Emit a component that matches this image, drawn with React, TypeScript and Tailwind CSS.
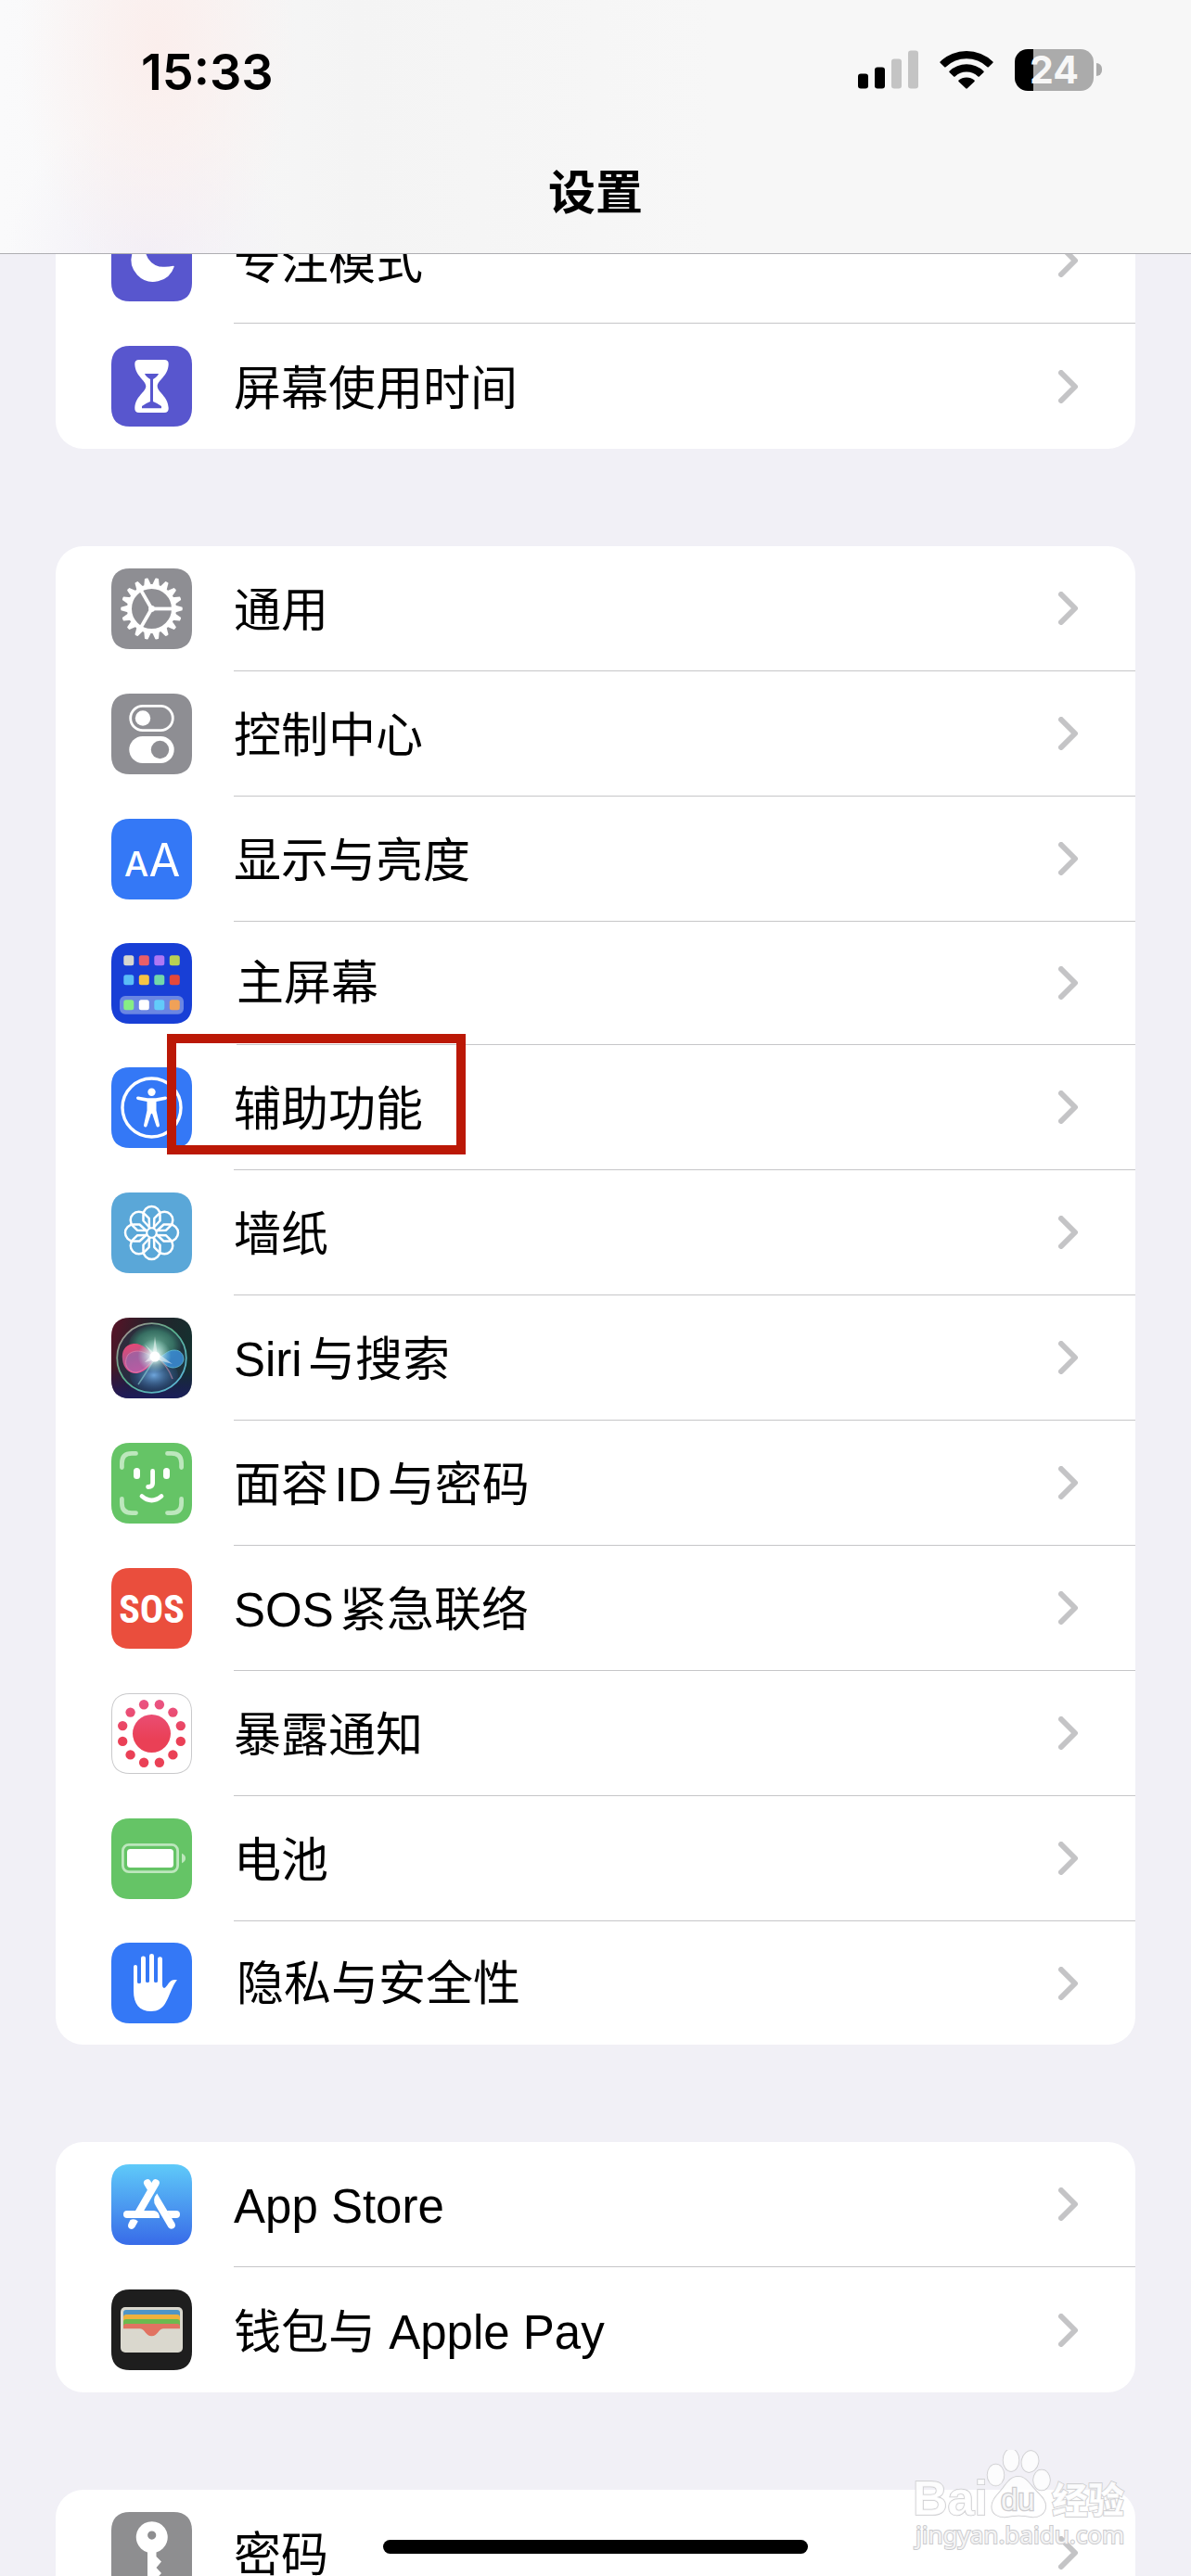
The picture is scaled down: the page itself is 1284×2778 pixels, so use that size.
import type { ReactNode } from "react";

type Item = {
  label: string;
  icon: ReactNode;
  compact?: boolean;
  highlighted?: boolean;
};

function Tile({ fill, children }: { fill: string; children?: ReactNode }) {
  return (
    <svg viewBox="0 0 87 87" className="block size-[87px]" aria-hidden="true">
      <path
        fill={fill}
        d="M20 0H67C80 0 87 7 87 20V67C87 80 80 87 67 87H20C7 87 0 80 0 67V20C0 7 7 0 20 0Z"
      />
      {children}
    </svg>
  );
}

function FocusIcon() {
  return (
    <Tile fill="#5856ce">
      <path
        d="M67 49.500A23 23 0 1 1 39 20A20 20 0 0 0 58 50.500Q62 50.500 67 49.500Z"
        fill="#fff"
        stroke="#fff"
        strokeWidth="1.500"
        strokeLinejoin="round"
      />
    </Tile>
  );
}

function HourglassIcon() {
  return (
    <Tile fill="#5856ce">
      <path
        d="M30 15H57Q62 15 61.700 20C61 33 49.700 37 49.700 43.500C49.700 50 61 54 61.700 67Q62 72 57 72H30Q25 72 25.300 67C26 54 37.300 50 37.300 43.500C37.300 37 26 33 25.300 20Q25 15 30 15Z"
        fill="#fff"
      />
      <path
        d="M36 30H51Q50 33 45 36V60Q50 62 54 65V67.300H33V65Q37 62 42 60V36Q37 33 36 30Z"
        fill="#5856ce"
      />
    </Tile>
  );
}

function GearIcon() {
  const teeth = Array.from({ length: 18 }, (_, i) => i * 20);
  return (
    <Tile fill="#8e8e93">
      <g transform="translate(43.500 43.500)" fill="#fff">
        {teeth.map((angle) => (
          <path key={angle} transform={`rotate(${angle})`} d="M25 -4L33 -1.800Q33.600 0 33 1.800L25 4Z" />
        ))}
        <circle r="24" fill="none" stroke="#fff" strokeWidth="5" />
        {[0, 120, 240].map((angle) => (
          <path key={angle} transform={`rotate(${angle})`} d="M0 -1.900H23V1.900H0Z" />
        ))}
        <circle r="3.400" />
      </g>
    </Tile>
  );
}

function TogglesIcon() {
  return (
    <Tile fill="#8e8e93">
      <rect x="20.700" y="13.400" width="45.600" height="26.200" rx="13.100" fill="none" stroke="#fff" strokeWidth="2.800" />
      <circle cx="34" cy="26.500" r="8.200" fill="#fff" />
      <rect x="19.300" y="46" width="48.400" height="29" rx="14.500" fill="#fff" />
      <circle cx="52.500" cy="60.500" r="9.700" fill="#8e8e93" />
    </Tile>
  );
}

function DisplayIcon() {
  return (
    <Tile fill="#3478f6">
      <g fill="#fff" fontFamily="Inter, sans-serif" textAnchor="middle">
        <text x="27" y="62" fontSize="37" fontWeight="500">A</text>
        <text x="57.500" y="62" fontSize="49" fontWeight="400">A</text>
      </g>
    </Tile>
  );
}

function HomeScreenIcon() {
  const rows = [
    { y: 13.3, colors: ["#d6d6cf", "#e95f68", "#ad77f5", "#b9d155"] },
    { y: 34.3, colors: ["#5abdf7", "#f6c445", "#72d7aa", "#e5483a"] },
    { y: 61.3, colors: ["#86ee85", "#ffffff", "#62cbfa", "#f0a158"] },
  ];
  return (
    <Tile fill="#183fd6">
      <rect x="9" y="57" width="69" height="19.700" rx="6" fill="#6a86e3" />
      {rows.map((row) =>
        row.colors.map((color, i) => (
          <rect key={color} x={13.3 + i * 16.5} y={row.y} width="11" height="11" rx="2.500" fill={color} />
        )),
      )}
    </Tile>
  );
}

function AccessibilityIcon() {
  return (
    <Tile fill="#3478f6">
      <circle cx="43.500" cy="43.500" r="31.500" fill="none" stroke="#fff" strokeWidth="3.400" />
      <circle cx="43.500" cy="26.700" r="4.200" fill="#fff" />
      <path
        d="M29 31.500L39 33.200H48L58 31.500Q60 31.300 60 33Q60 34.600 58.500 35L48.500 37V46.500L52 62.500Q52 64.600 50.300 64.600Q48.900 64.600 48.400 63L44.300 50.500Q43.500 49 42.700 50.500L38.600 63Q38.100 64.600 36.700 64.600Q35 64.600 35 62.500L38.500 46.500V37L28.500 35Q27 34.600 27 33Q27 31.300 29 31.500Z"
        fill="#fff"
      />
    </Tile>
  );
}

function WallpaperIcon() {
  const petals = [0, 45, 90, 135, 180, 225, 270, 315];
  return (
    <Tile fill="#5aa7d8">
      <g transform="translate(43.500 43.500)" fill="none" stroke="#fff" strokeWidth="2.500" strokeLinejoin="round">
        {petals.map((angle) => (
          <path
            key={angle}
            transform={`rotate(${angle})`}
            d="M-1.500 -5L-9 -13V-19.500A9 9 0 0 1 9 -19.500V-13L1.500 -5"
          />
        ))}
        <circle r="5.200" strokeWidth="2" />
      </g>
    </Tile>
  );
}

function SiriIcon() {
  return (
    <Tile fill="url(#siri-base)">
      <defs>
        <linearGradient id="siri-base" x1="0" y1="0" x2="1" y2="0.300">
          <stop offset="0" stopColor="#5a1226" />
          <stop offset="0.450" stopColor="#26222b" />
          <stop offset="1" stopColor="#15302f" />
        </linearGradient>
        <linearGradient id="siri-floor" x1="0" y1="0" x2="0" y2="1">
          <stop offset="0.300" stopColor="#1c1060" stopOpacity="0" />
          <stop offset="1" stopColor="#1c1a66" stopOpacity="0.800" />
        </linearGradient>
        <linearGradient id="siri-ring" x1="0" y1="0" x2="1" y2="1">
          <stop offset="0" stopColor="#b58a92" />
          <stop offset="0.450" stopColor="#58b08a" />
          <stop offset="1" stopColor="#5cb6e6" />
        </linearGradient>
        <radialGradient id="siri-green">
          <stop offset="0" stopColor="#6aa893" />
          <stop offset="0.700" stopColor="#3a7a69" stopOpacity="0.850" />
          <stop offset="1" stopColor="#2f6f5f" stopOpacity="0.200" />
        </radialGradient>
        <radialGradient id="siri-blue">
          <stop offset="0" stopColor="#6fa6dc" />
          <stop offset="1" stopColor="#24558f" stopOpacity="0.200" />
        </radialGradient>
        <linearGradient id="siri-pink" x1="0" y1="0" x2="0.300" y2="1">
          <stop offset="0" stopColor="#ef4570" />
          <stop offset="0.500" stopColor="#b8568c" />
          <stop offset="1" stopColor="#ea4a92" />
        </linearGradient>
        <radialGradient id="siri-glow">
          <stop offset="0" stopColor="#ffffff" />
          <stop offset="0.300" stopColor="#e6fffb" stopOpacity="0.800" />
          <stop offset="1" stopColor="#a8e6dc" stopOpacity="0" />
        </radialGradient>
      </defs>
      <path
        fill="url(#siri-floor)"
        d="M0 40H87V67C87 80 80 87 67 87H20C7 87 0 80 0 67Z"
      />
      <circle cx="43.500" cy="43.500" r="37" fill="#27384a" fillOpacity="0.600" />
      <ellipse cx="47" cy="29" rx="28" ry="21" fill="url(#siri-green)" />
      <ellipse cx="46" cy="62" rx="26" ry="18" fill="url(#siri-blue)" />
      <path
        d="M50 44C40 34 32 27 24 28C14 29 11 37 12 45C13 55 20 61 28 60C38 58 42 50 50 44Z"
        fill="url(#siri-pink)"
      />
      <path
        d="M47 44C36 36 26 33 18 40C12 50 18 59 27 59C37 57 40 50 47 44Z"
        fill="#8a6cb4"
        fillOpacity="0.500"
        stroke="#e08ab0"
        strokeWidth="0.700"
      />
      <path
        d="M50 43C56 42 60 35 68 35C75 35 78 40 78 45C77 51 72 54 66 54C58 53 56 47 50 43Z"
        fill="#3a8ad0"
        fillOpacity="0.900"
        stroke="#5fc0d8"
        strokeWidth="0.800"
      />
      <path d="M48 42Q36 62 29 72" stroke="#8fd2d4" strokeOpacity="0.600" strokeWidth="1.500" fill="none" />
      <path d="M48 42Q60 50 66 66" stroke="#c98aa8" strokeOpacity="0.600" strokeWidth="1.500" fill="none" />
      <circle cx="43.500" cy="43.500" r="37.300" fill="none" stroke="url(#siri-ring)" strokeWidth="1.800" />
      <circle cx="46.500" cy="41" r="18" fill="url(#siri-glow)" />
      <path d="M47 20L49.500 38L66 50L48 45L36 48L44 40L36 29L45 37Z" fill="#fff" fillOpacity="0.500" />
      <circle cx="47" cy="42" r="5.500" fill="#fff" />
    </Tile>
  );
}

function FaceIdIcon() {
  return (
    <Tile fill="#65c466">
      <g fill="none" strokeLinecap="round" strokeWidth="4.800">
        <path
          d="M11.400 26.500V22Q11.400 11.400 22 11.400H26.500M60.500 11.400H65Q75.600 11.400 75.600 22V26.500M75.600 60.500V65Q75.600 75.600 65 75.600H60.500M26.500 75.600H22Q11.400 75.600 11.400 65V60.500"
          stroke="#bde7bd"
        />
        <path d="M44.600 30.500V43.500Q44.600 47.500 39.600 47.500M33 57.500Q43.500 66.500 54 57.500" stroke="#fff" />
      </g>
      <rect x="24" y="27" width="7" height="12" rx="3.500" fill="#fff" />
      <rect x="56" y="27" width="7" height="12" rx="3.500" fill="#fff" />
    </Tile>
  );
}

function SosIcon() {
  return (
    <Tile fill="#ea4e3d">
      <text
        x="43.500"
        y="58.500"
        fill="#fff"
        fontFamily="'Roboto Condensed', 'Liberation Sans Narrow', Roboto, sans-serif"
        fontSize="42"
        fontWeight="700"
        textAnchor="middle"
      >
        SOS
      </text>
    </Tile>
  );
}

function ExposureIcon() {
  const dots = Array.from({ length: 12 }, (_, i) => ((i * 30 + 15) * Math.PI) / 180);
  return (
    <Tile fill="#c9c9cb">
      <defs>
        <linearGradient id="exposure" gradientUnits="userSpaceOnUse" x1="0" y1="6" x2="0" y2="50">
          <stop offset="0" stopColor="#ea5585" />
          <stop offset="1" stopColor="#ea4056" />
        </linearGradient>
      </defs>
      <path
        fill="#fff"
        d="M20 1H67C79.500 1 86 7.500 86 20V67C86 79.500 79.500 86 67 86H20C7.500 86 1 79.500 1 67V20C1 7.500 7.500 1 20 1Z"
      />
      <circle cx="43.500" cy="43.500" r="20.500" fill="url(#exposure)" />
      {dots.map((a) => (
        <circle key={a} cx={43.5 + 32.4 * Math.cos(a)} cy={43.5 + 32.4 * Math.sin(a)} r="5.200" fill="url(#exposure)" />
      ))}
    </Tile>
  );
}

function BatteryIcon() {
  return (
    <Tile fill="#65c466">
      <rect x="12.400" y="28.400" width="59.200" height="29.200" rx="6.500" fill="none" stroke="#bde7bd" strokeWidth="2.800" />
      <rect x="17" y="33" width="50" height="20" rx="3.500" fill="#fff" />
      <path d="M76 37.800Q80 39.500 80 43Q80 46.500 76 48.300Z" fill="#bde7bd" />
    </Tile>
  );
}

function PrivacyIcon() {
  return (
    <Tile fill="#3478f6">
      <path
        d="M24 26Q24 24 26 24Q28 24 28 26V42.500Q28 44 30 44Q32 44 32 42.500V16.700Q32 14.500 34.500 14.500Q37 14.500 37 16.700V41.500Q37 43 39 43Q41 43 41 41.500V14.200Q41 12 43.500 12Q46 12 46 14.200V41.500Q46 43 48 43Q50 43 50 41.500V17.500Q50 15.300 52.500 15.300Q55 15.300 55 17.500V46Q55.300 49.500 57.500 48.800Q59 48 62 43.500Q65.500 39 71 40.300Q69 42 66 48.500C60 61 58 74 43 74C30 74 24 66 24 52Z"
        fill="#fff"
      />
    </Tile>
  );
}

function AppStoreIcon() {
  return (
    <Tile fill="url(#app-store)">
      <defs>
        <linearGradient id="app-store" x1="0" y1="0" x2="0" y2="1">
          <stop offset="0" stopColor="#5fcaf9" />
          <stop offset="1" stopColor="#386be8" />
        </linearGradient>
      </defs>
      <g fill="#fff">
        <path d="M47.800 20.200L29.500 52" stroke="#fff" strokeWidth="8" strokeLinecap="round" />
        <path d="M39 20.200L42.500 26" stroke="#fff" strokeWidth="8" strokeLinecap="round" />
        <path d="M49.300 31.500Q43.500 38 48 45L61.500 68Q63.500 70.500 66.700 69.300Q70 67.500 68.500 63.800Z" />
        <path d="M17 50H46Q52 50.500 52 58H17A4 4 0 0 1 17 50Z" />
        <path d="M60 50H70A4 4 0 0 1 70 58H64.500Z" />
        <path d="M20.500 60Q25 58 28.800 61.500L25.500 67.500Q23.500 71 20 69.500Q17 67.700 18.500 64Z" />
      </g>
    </Tile>
  );
}

function WalletIcon() {
  return (
    <Tile fill="#1e1e1e">
      <rect x="10" y="19" width="67" height="49" rx="5" fill="#dad8ce" />
      <path d="M13 43V25Q13 22 16 22H71Q74 22 74 25V43Z" fill="#4f95c6" />
      <path d="M13 43V30Q13 27 16 27H71Q74 27 74 30V43Z" fill="#f0b13c" />
      <path d="M13 43V35Q13 32 16 32H71Q74 32 74 35V43Z" fill="#6cba4f" />
      <path d="M10 41.500H77V45H10Z" fill="#dad8ce" />
      <path
        d="M13 42.200V40Q13 37 16 37H71Q74 37 74 40V42.200H56C50 42.500 50.500 50.300 43.500 50.300C36.500 50.300 37 42.500 31 42.200Z"
        fill="#e17362"
      />
    </Tile>
  );
}

function KeyIcon() {
  return (
    <Tile fill="#8e8e90">
      <path
        fillRule="evenodd"
        d="M39 43.500A17 17 0 1 1 48.500 43.500V48L54 53.500L48.500 60L54 66L48.500 72L43.500 78L39 74ZM43.700 20.500A4.600 4.600 0 1 0 43.700 29.700A4.600 4.600 0 1 0 43.700 20.500Z"
        fill="#fff"
      />
    </Tile>
  );
}

const groups: Item[][] = [
  [
    { label: "专注模式", icon: <FocusIcon /> },
    { label: "屏幕使用时间", icon: <HourglassIcon /> },
  ],
  [
    { label: "通用", icon: <GearIcon /> },
    { label: "控制中心", icon: <TogglesIcon /> },
    { label: "显示与亮度", icon: <DisplayIcon /> },
    { label: "主屏幕", icon: <HomeScreenIcon />, compact: true },
    { label: "辅助功能", icon: <AccessibilityIcon />, highlighted: true },
    { label: "墙纸", icon: <WallpaperIcon /> },
    { label: "Siri与搜索", icon: <SiriIcon /> },
    { label: "面容ID与密码", icon: <FaceIdIcon /> },
    { label: "SOS紧急联络", icon: <SosIcon /> },
    { label: "暴露通知", icon: <ExposureIcon /> },
    { label: "电池", icon: <BatteryIcon /> },
    { label: "隐私与安全性", icon: <PrivacyIcon />, compact: true },
  ],
  [
    { label: "App Store", icon: <AppStoreIcon /> },
    { label: "钱包与 Apple Pay", icon: <WalletIcon /> },
  ],
  [{ label: "密码", icon: <KeyIcon /> }],
];

function Chevron() {
  return (
    <svg viewBox="0 0 22 36" className="h-9 w-[22px] shrink-0" aria-hidden="true">
      <path d="M3 3L18 18L3 33" fill="none" stroke="#c4c4c6" strokeWidth="6" strokeLinecap="round" strokeLinejoin="round" />
    </svg>
  );
}

function Row({ item, last }: { item: Item; last: boolean }) {
  return (
    <li className="relative">
      <a href="#" className="flex items-center pl-15">
        <span className={item.compact ? "my-[23px] mr-12 shrink-0" : "my-6 mr-[45px] shrink-0"}>{item.icon}</span>
        <span
          className={
            last
              ? "flex flex-1 items-center justify-between self-stretch pr-[61px]"
              : "flex flex-1 items-center justify-between self-stretch border-b border-[#c6c6c8] pr-[61px]"
          }
        >
          <span
            className={
              item.compact
                ? "pt-0.5 text-[51px] leading-[60px] [text-autospace:normal]"
                : "pt-1.5 text-[51px] leading-[60px] [text-autospace:normal]"
            }
          >
            {item.label}
          </span>
          <Chevron />
        </span>
      </a>
      {item.highlighted && (
        <span className="pointer-events-none absolute -top-3 left-30 h-[130px] w-[322px] border-10 border-[#bb1806]" />
      )}
    </li>
  );
}

function StatusIcons() {
  return (
    <div className="flex items-center gap-[23px]">
      <svg viewBox="0 0 65 42" className="h-[42px] w-[65px]" aria-hidden="true">
        <rect x="0" y="25.500" width="11" height="16" rx="3" />
        <rect x="18" y="18.500" width="11" height="23" rx="3" />
        <rect x="36" y="9.500" width="11" height="32" rx="3" fill="#c4c4c4" />
        <rect x="54" y="0.500" width="11" height="41" rx="3" fill="#c4c4c4" />
      </svg>
      <svg viewBox="0 0 58 42" className="h-[42px] w-[58px]" aria-hidden="true">
        <path d="M0.600 12.500A41 41 0 0 1 57.400 12.500Q58 13.200 57.400 13.800L52.800 18.200Q52.100 18.800 51.400 18.200A32.500 32.500 0 0 0 6.600 18.200Q5.900 18.800 5.200 18.200L0.600 13.800Q0 13.200 0.600 12.500Z" />
        <path d="M10.500 22.700A27 27 0 0 1 47.500 22.700Q48.100 23.400 47.500 24L42.800 28.400Q42.100 29 41.400 28.400A18 18 0 0 0 16.600 28.400Q15.900 29 15.200 28.400L10.500 24Q9.900 23.400 10.500 22.700Z" />
        <path d="M20.500 32.600A13 13 0 0 1 37.500 32.600Q38.100 33.300 37.500 33.900L29.800 41.300Q29 42 28.200 41.300L20.500 33.900Q19.900 33.300 20.500 32.600Z" />
      </svg>
      <div className="flex items-center gap-[3px]">
        <div className="flex h-[45px] w-[85px] items-center justify-center rounded-[14px] bg-[linear-gradient(to_right,#000_24%,#ababab_24%)]">
          <span className="text-[41px] leading-[45px] font-bold text-[#f7f7f7]">24</span>
        </div>
        <span className="h-[14px] w-[6px] rounded-r-full bg-[#ababab]" />
      </div>
    </div>
  );
}

function Watermark() {
  return (
    <svg
      viewBox="0 0 236 116"
      className="pointer-events-none absolute right-16 bottom-5 h-[116px] w-[236px]"
      role="img"
      aria-label="Baidu 经验"
    >
      <g fill="#fff" fillOpacity="0.800" stroke="#cbcbce" strokeWidth="1.500" paintOrder="stroke">
        <text x="0" y="70" fontFamily="'Liberation Sans', sans-serif" fontWeight="700" fontSize="52">Bai</text>
        <ellipse cx="89.500" cy="27" rx="9" ry="11.500" />
        <ellipse cx="106" cy="11" rx="8.500" ry="12" />
        <ellipse cx="126.500" cy="12.500" rx="9" ry="11.500" transform="rotate(12 126.500 12.500)" />
        <ellipse cx="139" cy="32.500" rx="9" ry="11" />
        <path d="M113.700 28.700C121 28.700 125 35 130 41C136 48 143.500 53 143.300 61C143 69 136 73 128 72.300Q114 69 101 72.300C92 73 85 69 85.200 61C85.500 53 92 48 97.500 41C102 35 106 28.700 113.700 28.700Z" />
        <text x="95" y="65" fontFamily="'Liberation Sans', sans-serif" fontSize="33" strokeWidth="2.500">du</text>
        <text x="150" y="68" fontFamily="'Noto Sans CJK SC', sans-serif" fontWeight="900" fontSize="39">经验</text>
        <text x="3" y="101" fontFamily="'Noto Sans', sans-serif" fontSize="26" strokeWidth="2">jingyan.baidu.com</text>
      </g>
    </svg>
  );
}

export default function App() {
  return (
    <div className="relative flex h-screen flex-col overflow-hidden bg-[#f1f0f6] font-['Liberation_Sans','Noto_Sans_CJK_SC',sans-serif] text-black">
      <header className="z-10 border-b border-[#aeaeb2] bg-[#f6f6f6] bg-[radial-gradient(ellipse_150px_260px_at_170px_50px,#fbeeec_0%,transparent_100%),radial-gradient(ellipse_150px_150px_at_160px_270px,#f2eff7_0%,transparent_100%),linear-gradient(to_right,#fafafb_0%,#f4f4f4_30%,#f7f7f7_60%)] font-[Inter,'Noto_Sans_CJK_SC',sans-serif]">
        <div className="flex items-center justify-between pt-10 pr-24 pl-[152px]">
          <time className="pt-1.5 text-[54px] leading-[64px] font-semibold">15:33</time>
          <StatusIcons />
        </div>
        <h1 className="pt-17 pb-[35px] text-center text-[51px] leading-[60px] font-bold">设置</h1>
      </header>
      <main className="-mt-15 flex flex-col gap-[105px] px-15">
        {groups.map((items) => (
          <ul key={items[0].label} className="rounded-[30px] bg-white">
            {items.map((item, i) => (
              <Row key={item.label} item={item} last={i === items.length - 1} />
            ))}
          </ul>
        ))}
      </main>
      <Watermark />
      <div className="absolute bottom-6 left-1/2 h-[15px] w-[458px] -translate-x-1/2 rounded-full bg-black" />
    </div>
  );
}
